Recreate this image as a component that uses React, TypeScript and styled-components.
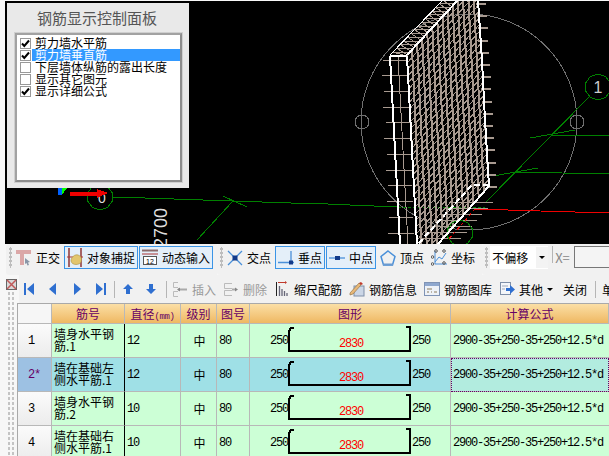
import styled, { createGlobalStyle } from 'styled-components'

const GlobalStyle = createGlobalStyle`
  html, body { margin: 0; padding: 0; background: #f7f7f7; }
  body { font-family: "Noto Sans CJK SC", "Liberation Sans", sans-serif; font-size: 12px; color: #000; }
`

const Page = styled.div`
  width: 609px;
  height: 456px;
  overflow: hidden;
  padding-top: 1px;
  box-sizing: border-box;
  display: flex;
  flex-direction: column;
  background: #f7f7f7;
`
const Viewport = styled.div`
  position: relative;
  margin-left: 5px;
  height: 243px;
  flex: none;
  background: #000;
  overflow: hidden;
  svg { display: block; }
`
const Panel = styled.div`
  position: absolute;
  left: 2px;
  top: 2px;
  width: 182px;
  height: 185px;
  box-sizing: border-box;
  background: #e9e9e9;
  padding: 0 7px 0 8px;
  display: flex;
  flex-direction: column;
`
const PanelTitle = styled.div`
  height: 30px;
  line-height: 30px;
  font-size: 15px;
  color: #555;
  text-align: center;
  margin-right: 3px;
`
const ListBox = styled.div`
  width: 167px;
  height: 149px;
  box-sizing: border-box;
  background: #fff;
  border: 2px solid #a2a2a2;
  border-right-color: #8c8c8c;
  border-bottom-color: #8c8c8c;
  outline: 1px solid #cfcfcf;
  padding: 2px 0 0 3px;
`
const ListRow = styled.div`
  height: 12px;
  display: flex;
  align-items: center;
  white-space: nowrap;
`
const CheckBox = styled.span`
  width: 11px;
  height: 11px;
  box-sizing: border-box;
  flex: none;
  border: 1px solid #999;
  background: #fff;
  display: flex;
  align-items: center;
  justify-content: center;
`
const ListLabel = styled.span<{ $selected?: boolean }>`
  margin-left: 1px;
  padding-left: 3px;
  width: 146px;
  height: 12px;
  line-height: 12px;
  font-size: 12px;
  color: ${p => (p.$selected ? '#fff' : '#000')};
  background: ${p => (p.$selected ? '#3399ff' : 'transparent')};
`

const TopBar = styled.div`
  display: flex;
  height: 31px;
  flex: none;
  padding-left: 6px;
`
const BarGroup = styled.div`
  display: flex;
  gap: 1px;
  align-items: flex-start;
  padding: 2px 4px 5px 3px;
  background: #f1f1f1;
  border-radius: 3px 0 0 3px;
  box-sizing: border-box;
  height: 31px;
`
const Grip = styled.div`
  width: 3px;
  height: 21px;
  margin-top: 1px;
  flex: none;
  background-image: radial-gradient(#bdbdbd 1.2px, transparent 1.4px);
  background-size: 3px 4px;
`
const SnapButton = styled.div<{ $on?: boolean }>`
  display: flex;
  align-items: center;
  gap: 4px;
  height: 23px;
  padding: 0 2px;
  box-sizing: border-box;
  border: 1px solid ${p => (p.$on ? '#3a94e6' : 'transparent')};
  background: ${p => (p.$on ? '#e4eff9' : 'transparent')};
  white-space: nowrap;
  svg { flex: none; }
`
const OffsetSelect = styled.div`
  width: 58px;
  height: 23px;
  margin-left: 1px;
  background: #fff;
  display: flex;
  align-items: center;
  padding-left: 2px;
  box-sizing: border-box;
  flex: none;
`
const SelectArrow = styled.span`
  margin-left: auto;
  width: 12px;
  height: 21px;
  background: #f3f3f3;
  display: flex;
  align-items: center;
  justify-content: center;
`
const Caret = styled.span`
  display: inline-block;
  width: 0;
  height: 0;
  border-left: 3px solid transparent;
  border-right: 3px solid transparent;
  border-top: 3px solid #000;
`
const CoordLabel = styled.span`
  color: #888;
  font-size: 13px;
  margin-left: 1px;
  width: 18px;
  height: 23px;
  line-height: 23px;
`
const CoordInput = styled.div`
  width: 60px;
  height: 22px;
  flex: none;
  box-sizing: border-box;
  border: 1px solid #777;
  border-right: 0;
  background: #f4f4f4;
`
const Bottom = styled.div`
  display: flex;
  flex: 1;
  min-height: 0;
`
const SideStrip = styled.div`
  width: 17px;
  flex: none;
  padding: 4px 0 0 6px;
  box-sizing: border-box;
  display: flex;
  flex-direction: column;
  gap: 1px;
`
const SideDots = styled.div`
  flex: 1;
  width: 8px;
  margin-left: 1px;
  background-image: radial-gradient(#c4c4c4 1px, transparent 1.3px);
  background-size: 4px 5px;
`
const Main = styled.div`
  flex: 1;
  min-width: 0;
  display: flex;
  flex-direction: column;
`
const ActionBar = styled.div`
  height: 28px;
  flex: none;
  margin-left: 2px;
  padding-left: 5px;
  display: flex;
  align-items: center;
  background: #f1f1f1;
  white-space: nowrap;
  overflow: hidden;
`
const NavIcon = styled.span<{ $left?: number }>`
  display: flex;
  flex: none;
  margin-left: ${p => p.$left ?? 14}px;
  &:first-child { margin-left: 0; }
`
const Divider = styled.span<{ $left: number }>`
  width: 1px;
  height: 17px;
  flex: none;
  background: #b5b5b5;
  margin-left: ${p => p.$left}px;
`
const Action = styled.span<{ $off?: boolean; $left?: number }>`
  display: flex;
  align-items: center;
  flex: none;
  gap: 4px;
  margin-left: ${p => p.$left ?? 7}px;
  color: ${p => (p.$off ? '#999' : '#000')};
  svg { flex: none; }
`
const Sheet = styled.div`
  flex: 1;
  min-height: 0;
  overflow: hidden;
  border-top: 1px solid #a9a9a9;
  border-left: 1px solid #a9a9a9;
  display: grid;
  grid-template-columns: 34px 73px 56px 36px 33px 201px 158px;
  grid-template-rows: 20px repeat(4, 34px);
`
const HeadCell = styled.div`
  box-sizing: border-box;
  background: linear-gradient(#fbdfa6, #efb862);
  border-right: 1px solid #b8b8b8;
  border-bottom: 1px solid #b8b8b8;
  color: #660066;
  font-size: 12px;
  text-align: center;
  line-height: 19px;
  white-space: nowrap;
  overflow: hidden;
`
const HeadUnit = styled.span`
  font-family: "Liberation Mono", monospace;
  font-size: 9px;
  letter-spacing: -0.4px;
`
const Corner = styled.div`
  box-sizing: border-box;
  background: #f6f6f6;
  border-right: 1px solid #b8b8b8;
  border-bottom: 1px solid #b8b8b8;
`
const RowHead = styled.div<{ $active?: boolean }>`
  box-sizing: border-box;
  padding-left: 10px;
  display: flex;
  align-items: center;
  border-right: 1px solid #b8b8b8;
  border-bottom: 1px solid #b8b8b8;
  background: ${p => (p.$active ? '#9dc1e3' : 'linear-gradient(#fbfbfb, #ececec)')};
  color: ${p => (p.$active ? '#660066' : '#000')};
  font-family: "Liberation Mono", monospace;
  font-size: 12px;
  letter-spacing: -1.2px;
`
const Cell = styled.div<{ $active?: boolean; $center?: boolean; $thick?: boolean }>`
  box-sizing: border-box;
  padding-left: 2px;
  display: flex;
  align-items: center;
  justify-content: ${p => (p.$center ? 'center' : 'flex-start')};
  background: ${p => (p.$active ? '#9fe0e6' : '#ccffd6')};
  border-right: 1px solid ${p => (p.$thick ? '#000' : '#b8b8b8')};
  border-bottom: 1px solid #b8b8b8;
  white-space: nowrap;
  overflow: hidden;
`
const NameCell = styled(Cell)`
  white-space: normal;
  line-height: 12px;
  font-size: 12px;
  padding-bottom: 1px;
  word-break: break-all;
`
const Mono = styled.span`
  font-family: "Liberation Mono", monospace;
  font-size: 12px;
  letter-spacing: -1.2px;
`
const ShapeCell = styled(Cell)`
  padding-left: 20px;
`
const ShapeDrawing = styled.svg`
  flex: none;
  width: 124px;
  height: 33px;
`
const FormulaCell = styled(Cell)<{ $focus?: boolean }>`
  background: ${p => (p.$focus ? '#b2ecdf' : '#ccffd6')};
  outline: ${p => (p.$focus ? '1px dotted #660066' : 'none')};
  outline-offset: -1px;
  border-right: 0;
`

type Seg = [number, number, number, number]

const lerp = (a: number, b: number, t: number) => a + (b - a) * t

const octagon = (cx: number, cy: number, r: number) =>
  Array.from({ length: 10 }, (_, i) => {
    const a = (i * Math.PI) / 5 + 0.3
    return `${(cx + r * Math.cos(a)).toFixed(1)},${(cy + r * Math.sin(a)).toFixed(1)}`
  }).join(' ')

// wall corners in page pixels
const A = [407, 56], B = [478, -22], C = [489, 186], D = [417, 268]
const E = [390, 56], F = [400, 300]

const mesh = (): { thick: Seg[]; thin: Seg[]; stair: Seg[] } => {
  const thick: Seg[] = []
  const thin: Seg[] = []
  const stair: Seg[] = []
  for (let i = 1; i < 14; i++) {
    const t = i / 14
    thick.push([lerp(A[0], B[0], t), lerp(A[1], B[1], t), lerp(D[0], C[0], t), lerp(D[1], C[1], t)])
  }
  for (let j = 0; j <= 32; j++) {
    const s = j / 32
    thin.push([lerp(A[0], D[0], s), lerp(A[1], D[1], s), lerp(B[0], C[0], s), lerp(B[1], C[1], s)])
  }
  // top face hatching
  for (let k = 0; k < 16; k++) {
    const t = k / 15
    thin.push([lerp(390, 443, t), lerp(56, 0, t), lerp(407, 458, t), lerp(56, 0, t)])
    thin.push([lerp(390, 443, t), lerp(56, 0, t), lerp(407, 458, Math.max(t - 0.12, 0)), lerp(56, 0, Math.max(t - 0.12, 0))])
  }
  // side face + ticks
  for (let y = 0; y < 16; y++) {
    const s = y / 15.5
    const lx = lerp(E[0], F[0], s)
    const ly = lerp(E[1], F[1], s) + 4
    const rx = lerp(A[0], D[0], s)
    thin.push([lx - 7 - (y % 2) * 2, ly, rx, ly])
    const ey = 4 + y * 12.2
    if (ey < 190) thick.push([lerp(478, 489, ey / 185) - 2, ey, lerp(478, 489, ey / 185) + 8, ey])
  }
  thin.push([398, 56, 408, 244])
  // stair at the foot of the wall
  for (let y = 202; y < 240; y += 6) {
    const ex = 489 - ((y - 186) * 51) / 58
    stair.push([ex - 22, y, ex + 18, y])
  }
  return { thick, thin, stair }
}

function CadDrawing() {
  const { thick, thin, stair } = mesh()
  const green: string[] = [
    '113,197 145,198 203,200 233,201 262,202 291,203 305,204',
    '305,203 350,205 398,207',
    '223,196 247,207',
    '233,201 197,240',
    '530,138 575,130',
    '550,135 609,136',
    '493,176 538,168',
    '515,172 609,174',
    '589,97 485,203',
  ]
  return (
    <svg width="604" height="243" viewBox="5 1 604 243" shapeRendering="crispEdges">
      <circle cx="469" cy="122" r="108" fill="none" stroke="#707070" />
      <circle cx="362" cy="122" r="7" fill="none" stroke="#707070" />
      <circle cx="577" cy="122" r="7" fill="none" stroke="#707070" />
      {green.map(p => <polyline key={p} points={p} fill="none" stroke="#008000" />)}
      <polyline points="398,207 485,208" fill="none" stroke="#008000" strokeDasharray="3 2" />
      <polyline points="475,209 540,211 609,213" fill="none" stroke="#f00000" />
      <polygon points={octagon(598, 87, 13)} fill="none" stroke="#008000" />
      <text x="598" y="93" textAnchor="middle" fontFamily="Liberation Sans" fontSize="16" fill="#ccc">1</text>
      <polygon points={octagon(100, 197, 13)} fill="none" stroke="#008000" />
      <text x="102" y="203" textAnchor="middle" fontFamily="Liberation Sans" fontSize="14" fill="#ddd">0</text>
      <rect x="58" y="188" width="4" height="7" fill="#0060ff" />
      <polygon points="62,188 67,188 62,195" fill="#00ff00" />
      <polygon points="70,192 97,192 97,189 108,193 97,198 97,196 70,196" fill="#f00000" />
      <text transform="translate(167 248) rotate(-90)" fontFamily="Liberation Sans" fontSize="18" fill="#ddd">2700</text>
      {thin.map((s, i) => <line key={i} x1={s[0]} y1={s[1]} x2={s[2]} y2={s[3]} stroke="#a89a90" />)}
      {thick.map((s, i) => <line key={i} x1={s[0]} y1={s[1]} x2={s[2]} y2={s[3]} stroke="#a89a90" strokeWidth="2" />)}
      {stair.map((s, i) => <line key={i} x1={s[0]} y1={s[1]} x2={s[2]} y2={s[3]} stroke="#a89a90" />)}
      <polygon points={octagon(460, 233, 13)} fill="none" stroke="#008000" />
      <polyline points="475,209 448,240" fill="none" stroke="#f00000" strokeDasharray="3 3" />
      <g fill="none" stroke="#fff" strokeWidth="2">
        <polyline points="390,56 395,150 400,244" />
        <polyline points="390,56 407,56" />
        <polyline points="407,56 412,150 417,244" />
        <polyline points="478,0 482,60 485,120 489,186" />
        <polyline points="489,186 438,244" />
        <polyline points="407,55 458,0" />
      </g>
      <polyline points="390,55 443,0" fill="none" stroke="#fff" />
      <polyline points="489,185 472,185 418,244" fill="none" stroke="#fff" strokeWidth="2" strokeDasharray="6 3" />
    </svg>
  )
}

const Tick = () => (
  <svg width="9" height="9" viewBox="0 0 9 9">
    <path d="M1 4.5 L3.3 7 L8 1.5" fill="none" stroke="#000" strokeWidth="2" />
  </svg>
)

const OrthoIcon = () => (
  <svg width="16" height="17" viewBox="0 0 16 17">
    <path d="M0 1h15v4H8v11H4V5H0z" fill="#dba7a7" />
    <path d="M9 9l5 4-2 .5 1 2.5-1.5.5-1-2.5L9 15z" fill="#8a97a8" />
  </svg>
)
const MagnetIcon = () => (
  <svg width="16" height="19" viewBox="0 0 16 19">
    <path d="M2 0v19M14 0v19" stroke="#8a2a2a" strokeWidth="1.4" />
    <path d="M0 9h16" stroke="#a33" />
    <path d="M4 13c0-4 4-7 7-6 3 1 4 3 3 7-1 3-9 4-10-1z" fill="#e2c66e" stroke="#a89040" strokeWidth=".6" />
  </svg>
)
const InputIcon = () => (
  <svg width="16" height="17" viewBox="0 0 16 17">
    <path d="M0 1.5h16" stroke="#8d6a6a" strokeWidth="2" />
    <path d="M0 5h16" stroke="#a33" />
    <rect x="1.5" y="7.5" width="13" height="8" fill="#fff" stroke="#555" />
    <text x="8" y="14.5" textAnchor="middle" fontFamily="Liberation Sans" fontSize="7" fill="#000">12</text>
  </svg>
)
const CrossIcon = () => (
  <svg width="16" height="16" viewBox="0 0 16 16">
    <path d="M1 1l14 14M15 1L1 15" stroke="#4a90d9" strokeWidth="1.3" />
    <rect x="5.5" y="5.5" width="5" height="5" fill="#123a8a" />
  </svg>
)
const PerpIcon = () => (
  <svg width="16" height="16" viewBox="0 0 16 16">
    <path d="M0 12.5h16M13 1v12" stroke="#4a90d9" strokeWidth="1.3" />
    <rect x="11" y="10.500" width="4" height="4" fill="#123a8a" />
  </svg>
)
const MidIcon = () => (
  <svg width="16" height="16" viewBox="0 0 16 16">
    <path d="M0 8h16" stroke="#4a90d9" strokeWidth="1.3" />
    <rect x="6" y="6" width="5" height="4" fill="#123a8a" />
  </svg>
)
const VertexIcon = () => (
  <svg width="16" height="16" viewBox="0 0 16 16">
    <path d="M8 1l7 5.500-2.500 8.500h-9L1 6.500z" fill="none" stroke="#4a90d9" strokeWidth="1.5" />
    <rect x="3" y="13.500" width="10" height="2" fill="#6a9ad0" />
  </svg>
)
const CoordIcon = () => (
  <svg width="16" height="17" viewBox="0 0 16 17">
    <path d="M4 2v13h12" stroke="#4a90d9" fill="none" />
    <path d="M4 13l4-5 3 2 4-6" stroke="#4a90d9" fill="none" />
    <g fill="none" stroke="#555">
      <circle cx="5" cy="2" r="1.300" />
      <circle cx="13" cy="2" r="1.300" />
      <circle cx="1.500" cy="8" r="1.300" />
      <circle cx="1.500" cy="15" r="1.300" />
      <circle cx="13" cy="14" r="1.300" />
    </g>
  </svg>
)

const blue = '#2f6fd0'
const FirstIcon = () => (
  <svg width="10" height="14" viewBox="0 0 10 14">
    <path d="M0 1h2v12H0z M10 1v12L3 7z" fill={blue} />
  </svg>
)
const PrevIcon = () => (
  <svg width="10" height="14" viewBox="0 0 10 14"><path d="M8 1v12L1 7z" fill={blue} /></svg>
)
const NextIcon = () => (
  <svg width="10" height="14" viewBox="0 0 10 14"><path d="M2 1v12l7-6z" fill={blue} /></svg>
)
const LastIcon = () => (
  <svg width="10" height="14" viewBox="0 0 10 14">
    <path d="M0 1v12l7-6z M8 1h2v12H8z" fill={blue} />
  </svg>
)
const UpIcon = () => (
  <svg width="10" height="10" viewBox="0 0 10 10"><path d="M5 0l5 5H7v5H3V5H0z" fill={blue} /></svg>
)
const DownIcon = () => (
  <svg width="10" height="10" viewBox="0 0 10 10"><path d="M5 10l5-5H7V0H3v5H0z" fill={blue} /></svg>
)
const InsertIcon = () => (
  <svg width="16" height="17" viewBox="0 0 16 17">
    <path d="M6 1.500H1.500v5H6M6 10.500H1.500v5H6" fill="none" stroke="#bbb" />
    <path d="M6 8.500h4M9 8.500h6" stroke="#aaa" strokeWidth="2" />
    <path d="M5 8.500l3-2v4z" fill="#888" />
  </svg>
)
const DeleteIcon = () => (
  <svg width="16" height="17" viewBox="0 0 16 17">
    <path d="M9 2.500H1.500v5H9M9 9.500H1.500v5H9" fill="none" stroke="#bbb" />
    <path d="M9 8.500h4" stroke="#aaa" strokeWidth="2" />
    <path d="M15 8.500l-3-2v4z" fill="#888" />
  </svg>
)
const ScaleIcon = () => (
  <svg width="16" height="16" viewBox="0 0 16 16">
    <path d="M2.500 1v14" stroke="#222" />
    <path d="M4 1.500h8" stroke="#c0392b" />
    <path d="M11 0l2 1.500-2 1.500z" fill="#c0392b" />
    <path d="M5.500 5v10M8 8v7M10.500 10v5M13 12v3" stroke="#667" strokeWidth="1.300" />
  </svg>
)
const InfoIcon = () => (
  <svg width="16" height="16" viewBox="0 0 16 16">
    <rect x="5" y="5" width="10" height="10" fill="#cbd6e6" stroke="#7f8fa8" />
    <path d="M1 12L10 2l2 2-8 9-3 1z" fill="#e8b878" stroke="#8a6a3a" strokeWidth=".6" />
    <path d="M10 2l2-1 2 2-2 1z" fill="#c0392b" />
  </svg>
)
const LibraryIcon = () => (
  <svg width="16" height="15" viewBox="0 0 16 15">
    <rect x=".5" y=".5" width="15" height="13" fill="#eef2f8" stroke="#7f93b5" />
    <rect x="1" y="1" width="14" height="3" fill="#8fa8cf" />
    <path d="M3 7h5M3 10h2M7 10h1M10 10h3" stroke="#8a7a5a" />
  </svg>
)
const OtherIcon = () => (
  <svg width="16" height="16" viewBox="0 0 16 16">
    <rect x="1.500" y="1.500" width="10" height="12" fill="#f4f6fa" stroke="#7f8fa8" />
    <path d="M3 5h6M3 8h3" stroke="#a0a8b8" />
    <path d="M7 7h4V4l5 4.500-5 4.500v-3H7z" fill="#2f6fd0" />
  </svg>
)
const CloseBox = () => (
  <svg width="11" height="11" viewBox="0 0 11 11">
    <rect x=".5" y=".5" width="10" height="10" fill="#d9d9d9" stroke="#666" />
    <path d="M1 1l9 9M10 1l-9 9" stroke="#c05a5a" strokeWidth="1.500" />
  </svg>
)

const Rebar = () => (
  <ShapeDrawing viewBox="0 0 124 33" shapeRendering="crispEdges">
    <path d="M6 4H3L1 7V26.500H122V7L122 3H118" fill="none" stroke="#000" strokeWidth="2" />
    <text x="63" y="23" textAnchor="middle" fontFamily="Liberation Mono" fontSize="12" letterSpacing="-1.2" fill="#f00">2830</text>
  </ShapeDrawing>
)

const layers = [
  { label: '剪力墙水平筋', on: true },
  { label: '剪力墙垂直筋', on: true, selected: true },
  { label: '下层墙体纵筋的露出长度', on: false },
  { label: '显示其它图元', on: false },
  { label: '显示详细公式', on: true },
]

const rows = [
  { no: '1', name: '墙身水平钢筋.1', d: '12' },
  { no: '2*', name: '墙在基础左侧水平筋.1', d: '12', active: true },
  { no: '3', name: '墙身水平钢筋.2', d: '10' },
  { no: '4', name: '墙在基础右侧水平筋.1', d: '10' },
]

export default function App() {
  return (
    <Page>
      <GlobalStyle />
      <Viewport>
        <CadDrawing />
        <Panel>
          <PanelTitle>钢筋显示控制面板</PanelTitle>
          <ListBox>
            {layers.map(l => (
              <ListRow key={l.label}>
                <CheckBox>{l.on && <Tick />}</CheckBox>
                <ListLabel $selected={l.selected}>{l.label}</ListLabel>
              </ListRow>
            ))}
          </ListBox>
        </Panel>
      </Viewport>

      <TopBar>
        <BarGroup>
          <Grip />
          <SnapButton><OrthoIcon />正交</SnapButton>
          <SnapButton $on><MagnetIcon />对象捕捉</SnapButton>
          <SnapButton $on><InputIcon />动态输入</SnapButton>
        </BarGroup>
        <BarGroup>
          <Grip />
          <SnapButton><CrossIcon />交点</SnapButton>
          <SnapButton $on><PerpIcon />垂点</SnapButton>
          <SnapButton $on><MidIcon />中点</SnapButton>
          <SnapButton><VertexIcon />顶点</SnapButton>
          <SnapButton><CoordIcon />坐标</SnapButton>
        </BarGroup>
        <BarGroup>
          <Grip />
          <OffsetSelect>不偏移<SelectArrow><Caret /></SelectArrow></OffsetSelect>
          <Divider $left={3} />
          <CoordLabel>X=</CoordLabel>
          <CoordInput />
        </BarGroup>
      </TopBar>

      <Bottom>
        <SideStrip>
          <CloseBox />
          <SideDots />
        </SideStrip>
        <Main>
          <ActionBar>
            <NavIcon><FirstIcon /></NavIcon>
            <NavIcon><PrevIcon /></NavIcon>
            <NavIcon><NextIcon /></NavIcon>
            <NavIcon><LastIcon /></NavIcon>
            <Divider $left={8} />
            <NavIcon $left={8}><UpIcon /></NavIcon>
            <NavIcon $left={13}><DownIcon /></NavIcon>
            <Divider $left={10} />
            <Action $off $left={5}><InsertIcon />插入</Action>
            <Action $off><DeleteIcon />删除</Action>
            <Action><ScaleIcon />缩尺配筋</Action>
            <Action><InfoIcon />钢筋信息</Action>
            <Action><LibraryIcon />钢筋图库</Action>
            <Action><OtherIcon />其他<Caret /></Action>
            <Action $left={10}>关闭</Action>
            <Divider $left={8} />
            <Action $left={6}>单</Action>
          </ActionBar>
          <Sheet>
            <Corner />
            <HeadCell>筋号</HeadCell>
            <HeadCell>直径<HeadUnit>(mm)</HeadUnit></HeadCell>
            <HeadCell>级别</HeadCell>
            <HeadCell>图号</HeadCell>
            <HeadCell>图形</HeadCell>
            <HeadCell>计算公式</HeadCell>
            {rows.map(r => [
              <RowHead key={r.no + 'h'} $active={r.active}>{r.no}</RowHead>,
              <NameCell key={r.no + 'n'} $active={r.active} $thick>{r.name}</NameCell>,
              <Cell key={r.no + 'd'} $active={r.active}><Mono>{r.d}</Mono></Cell>,
              <Cell key={r.no + 'g'} $active={r.active} $center>中</Cell>,
              <Cell key={r.no + 't'} $active={r.active}><Mono>80</Mono></Cell>,
              <ShapeCell key={r.no + 's'} $active={r.active}>
                <Mono>250</Mono><Rebar /><Mono>250</Mono>
              </ShapeCell>,
              <FormulaCell key={r.no + 'f'} $focus={r.active}>
                <Mono>2900-35+250-35+250+12.5*d</Mono>
              </FormulaCell>,
            ])}
          </Sheet>
        </Main>
      </Bottom>
    </Page>
  )
}
